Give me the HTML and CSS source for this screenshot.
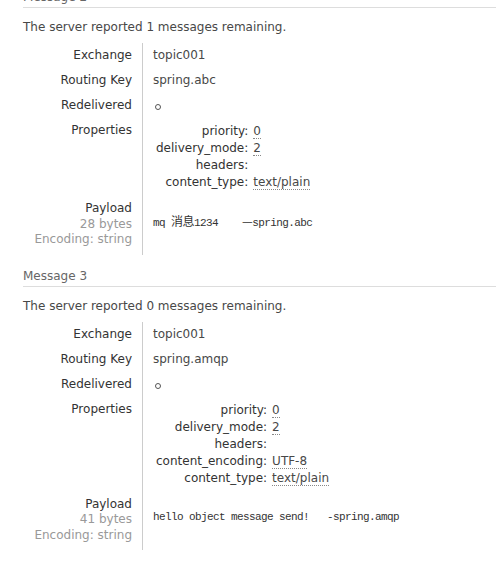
FILE: index.html
```html
<!DOCTYPE html>
<html>
<head>
<meta charset="utf-8">
<link rel="stylesheet" href="styles.css">
</head>
<body>
<div class="page">
  <section class="msg">
    <h3 class="msg-head">Message 2</h3>
    <p class="server">The server reported 1 messages remaining.</p>
    <table class="facts">
      <tr><th>Exchange</th><td>topic001</td></tr>
      <tr><th>Routing Key</th><td>spring.abc</td></tr>
      <tr><th>Redelivered</th><td><span class="circle"></span></td></tr>
      <tr class="props-row"><th>Properties</th><td>
        <table class="props">
          <tr><th>priority:</th><td><abbr>0</abbr></td></tr>
          <tr><th>delivery_mode:</th><td><abbr>2</abbr></td></tr>
          <tr><th>headers:</th><td></td></tr>
          <tr><th>content_type:</th><td><abbr>text/plain</abbr></td></tr>
        </table>
      </td></tr>
      <tr class="payload-row"><th>Payload<br><span class="sub">28 bytes</span><br><span class="sub">Encoding: string</span></th><td><pre class="payload">mq <span class="cjk">消息</span>1234    <span class="cjk">—</span>spring.abc</pre></td></tr>
    </table>
  </section>
  <section class="msg">
    <h3 class="msg-head">Message 3</h3>
    <p class="server">The server reported 0 messages remaining.</p>
    <table class="facts">
      <tr><th>Exchange</th><td>topic001</td></tr>
      <tr><th>Routing Key</th><td>spring.amqp</td></tr>
      <tr><th>Redelivered</th><td><span class="circle"></span></td></tr>
      <tr class="props-row"><th>Properties</th><td>
        <table class="props">
          <tr><th>priority:</th><td><abbr>0</abbr></td></tr>
          <tr><th>delivery_mode:</th><td><abbr>2</abbr></td></tr>
          <tr><th>headers:</th><td></td></tr>
          <tr><th>content_encoding:</th><td><abbr>UTF-8</abbr></td></tr>
          <tr><th>content_type:</th><td><abbr>text/plain</abbr></td></tr>
        </table>
      </td></tr>
      <tr class="payload-row"><th>Payload<br><span class="sub">41 bytes</span><br><span class="sub">Encoding: string</span></th><td><pre class="payload">hello object message send!   -spring.amqp</pre></td></tr>
    </table>
  </section>
</div>
</body>
</html>
```
FILE: styles.css
```css
html, body {
  margin: 0;
  padding: 0;
  background: #fff;
}
body {
  font-family: "DejaVu Sans", Verdana, sans-serif;
  font-size: 12px;
  color: #484848;
}
.page {
  padding-left: 23px;
  margin-top: -10px;
}
.msg + .msg {
  margin-top: 14px;
}
.msg-head {
  margin: 0;
  font-size: 12px;
  font-weight: normal;
  line-height: 14px;
  color: #666;
  padding-bottom: 3px;
  border-bottom: 1px solid #ddd;
}
.server {
  margin: 11px 0 0 0;
  line-height: 16px;
  color: #484848;
}
.facts {
  border-collapse: collapse;
  margin-top: 8px;
}
.facts > tbody > tr > th,
.facts > tbody > tr > td {
  padding: 5px 10px;
  line-height: 15px;
  vertical-align: top;
}
.facts > tbody > tr > th {
  text-align: right;
  font-weight: normal;
  color: #333;
  width: 109px;
  padding-left: 0;
  border-right: 1px solid #ccc;
}
.props-row > td {
  padding-left: 0;
}
.props {
  border-collapse: collapse;
}
.props th,
.props td {
  padding: 0;
  line-height: 17px;
  vertical-align: top;
}
.props th {
  text-align: right;
  font-weight: normal;
  color: #333;
  padding-left: 3px;
  padding-right: 5px;
}
.props td {
  text-align: left;
}
abbr {
  text-decoration: none;
  border-bottom: 1px dotted #888;
}
.circle {
  display: inline-block;
  width: 4px;
  height: 4px;
  border: 1px solid #555;
  border-radius: 50%;
  margin-left: 2px;
  vertical-align: -1px;
}
.sub {
  color: #999;
}
.payload-row > th,
.payload-row > td {
  padding-bottom: 7px !important;
}
.payload-row > th {
  line-height: 15.5px !important;
}
.payload {
  margin: 13px 0 0 0;
  font-family: "Liberation Mono", "Noto Sans CJK SC", monospace;
  font-size: 11px;
  letter-spacing: -0.6px;
  line-height: 14px;
  color: #333;
}
.cjk {
  font-family: "Noto Sans CJK SC", sans-serif;
  font-size: 12px;
  letter-spacing: -0.5px;
}
```
